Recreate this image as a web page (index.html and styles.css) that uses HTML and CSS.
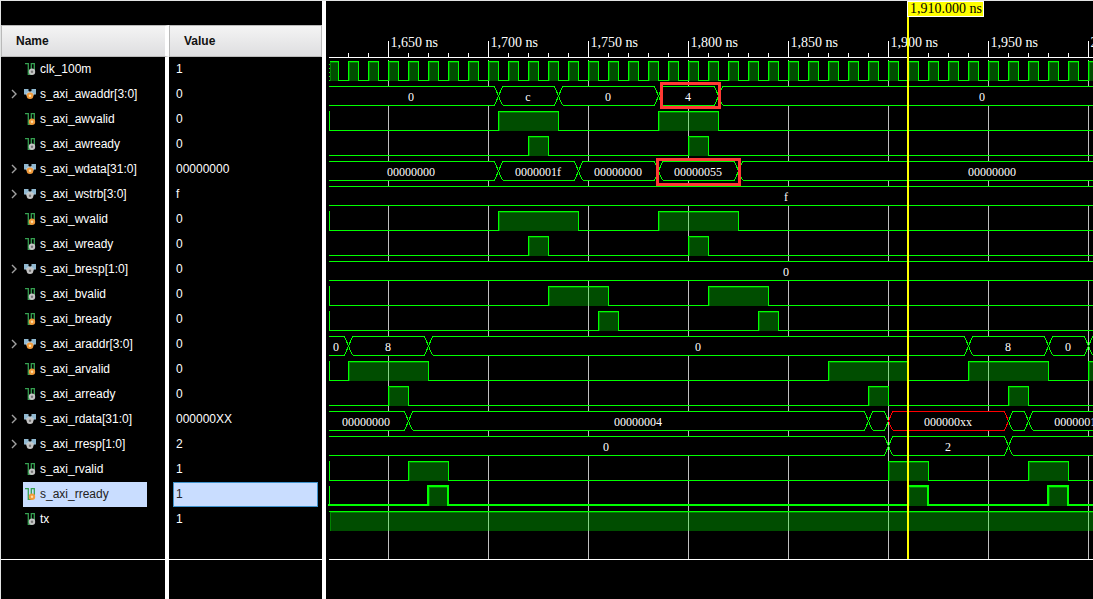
FILE: index.html
```
<!DOCTYPE html>
<html lang="en">
<head>
<meta charset="utf-8">
<title>Waveform</title>
<link rel="stylesheet" href="styles.css">
</head>
<body>
<svg class="symbols" aria-hidden="true">
  <symbol id="scalar" viewBox="0 0 12 12">
    <path d="M1 0.700H4.300V11.300H7.300V0.700H10.300V7" fill="none" stroke="#35a050" stroke-width="1.300"/>
    <circle cx="8" cy="8.700" r="3.200" fill="currentColor"/>
    <circle cx="8" cy="8.700" r="1.200" class="badge-core"/>
  </symbol>
  <symbol id="bus" viewBox="0 0 12 12">
    <path d="M0 1H4.500V3L6 4L7.500 3V1H12V6.500H9L6 8L3 6.500H0Z" fill="#90b8d0"/>
    <path d="M1.500 6L4.500 3.500H7.500L10.500 6L9 8.500H3Z" fill="#c8d4dc" opacity="0.700"/>
    <circle cx="6" cy="7.800" r="3.300" fill="currentColor"/>
    <circle cx="6" cy="7.800" r="1.200" class="badge-core"/>
  </symbol>
  <symbol id="chevron" viewBox="0 0 6 10">
    <path d="M1 1L5 5L1 9" fill="none" stroke="currentColor" stroke-width="1.400"/>
  </symbol>
</svg>
<main class="viewer">
  <section class="signals">
    <div class="spacer"></div>
    <table class="signal-table">
      <thead><tr><th class="name-head" scope="col">Name</th><th class="value-head" scope="col">Value</th></tr></thead>
      <tbody id="rows"></tbody>
    </table>
  </section>
  <section class="wave"><svg id="plot" class="plot" role="img" aria-label="Signal waveforms"></svg></section>
</main>
<script src="wave.js"></script>
</body>
</html>
```
FILE: styles.css
```
* { box-sizing: border-box; }
body {
  margin: 0;
  height: 100vh;
  background: #000;
  color: #fff;
  font: 12px/24px "Liberation Sans", Arial, sans-serif;
  overflow: hidden;
}
.symbols { position: absolute; width: 0; height: 0; }
.viewer {
  display: flex;
  height: 100%;
  border-top: 1px solid #e2e4e4;
  border-left: 1px solid #e2e4e4;
}
.signals {
  flex: 0 0 325px;
  display: flex;
  flex-direction: column;
  border-right: 4px solid #fff;
}
.spacer { flex: 0 0 24px; }
.signal-table {
  flex: 1;
  width: 100%;
  height: 100%;
  table-layout: fixed;
  border-spacing: 0;
}
th {
  height: 32px;
  padding: 0 14px;
  border: 1px solid #b9b9b9;
  background: linear-gradient(#f4f4f4, #dedee0);
  background-clip: padding-box;
  color: #111;
  text-align: left;
}
.name-head { width: 168px; border-right: 4px solid #fff; }
td { height: 25px; padding: 0; }
td:first-child { border-right: 4px solid #fff; }
.name-cell { display: flex; height: 25px; align-items: stretch; }
.expand {
  display: flex;
  align-items: center;
  width: 22px;
  padding: 0 0 1px 10px;
  border: 0;
  background: none;
  color: #a0a0a0;
}
.expand svg { width: 6px; height: 10px; }
.indent { width: 22px; }
.signal {
  display: flex;
  align-items: center;
  gap: 4px;
  flex: 1;
  margin-right: 18px;
  padding: 0 0 1px 1px;
}
.icon { width: 12px; height: 12px; }
.internal { color: #c4c4c4; fill: #777; }
.port { color: #f29a3a; fill: #ffe0a8; }
.value { height: 25px; margin: 0 4px; padding: 0 3px; }
.selected .signal, .selected .value { background: #c9ddff; color: #222; }
.selected .value { border: 1px solid #3f92cc; padding: 0 2px; line-height: 22px; }
.gap td { height: 27px; }
.rest td { height: auto; border-top: 1px solid #fff; }
.wave { flex: 1; min-width: 0; }
.plot { display: block; width: 100%; height: 100%; }
.plot path, .plot rect { shape-rendering: crispEdges; }
.line { fill: none; stroke: #0f0; }
.thick { stroke-width: 2; }
.fill { fill: rgba(0, 255, 0, 0.3); }
.bus { fill: #000; stroke: #0f0; }
.unknown { stroke: #f00; }
.grid { stroke: #c0c0c0; }
.ruler { stroke: #fff; }
.dots { stroke: #0f0; stroke-dasharray: 1 3; }
.bus-text { fill: #fff; font: 12px "Liberation Serif", serif; text-anchor: middle; }
.time-text { fill: #fff; font: 14px "Liberation Serif", serif; }
.flag-text { fill: #000; }
.flag { fill: #ff0; stroke: #fff; }
.cursor { fill: #ff0; }
.mark { fill: none; stroke: #ff3a33; stroke-width: 3; }
```
FILE: wave.js
```
// kind: "scalar" uses high intervals; "bus" uses change times and labels [time, text]. Times in ns.
const signals = [
  { name: "clk_100m", value: "1", clock: true },
  { name: "s_axi_awaddr[3:0]", value: "0", port: true, changes: [1705, 1735, 1785, 1815], labels: [[1661.5, "0"], [1720, "c"], [1760, "0"], [1800, "4"], [1947, "0"]] },
  { name: "s_axi_awvalid", value: "0", port: true, edge: true, high: [[1705, 1735], [1785, 1815]] },
  { name: "s_axi_awready", value: "0", high: [[1720, 1730], [1800, 1810]] },
  { name: "s_axi_wdata[31:0]", value: "00000000", port: true, changes: [1705, 1745, 1785, 1825], labels: [[1661.5, "00000000"], [1725, "0000001f"], [1765, "00000000"], [1805, "00000055"], [1952, "00000000"]] },
  { name: "s_axi_wstrb[3:0]", value: "f", changes: [], labels: [[1849, "f"]] },
  { name: "s_axi_wvalid", value: "0", port: true, edge: true, high: [[1705, 1745], [1785, 1825]] },
  { name: "s_axi_wready", value: "0", high: [[1720, 1730], [1800, 1810]] },
  { name: "s_axi_bresp[1:0]", value: "0", changes: [], labels: [[1849, "0"]] },
  { name: "s_axi_bvalid", value: "0", edge: true, high: [[1730, 1760], [1810, 1840]] },
  { name: "s_axi_bready", value: "0", port: true, edge: true, high: [[1755, 1765], [1835, 1845]] },
  { name: "s_axi_araddr[3:0]", value: "0", port: true, changes: [1630, 1670, 1940, 1980, 2000], labels: [[1624, "0"], [1650, "8"], [1805, "0"], [1960, "8"], [1990, "0"]] },
  { name: "s_axi_arvalid", value: "0", port: true, edge: true, high: [[1630, 1670], [1870, 1910], [1940, 1980], [2000, 2040]] },
  { name: "s_axi_arready", value: "0", high: [[1650, 1660], [1890, 1900], [1960, 1970]] },
  { name: "s_axi_rdata[31:0]", value: "000000XX", changes: [1660, 1890, 1900, 1960, 1970], unknown: 1900, labels: [[1639, "00000000"], [1775, "00000004"], [1930, "000000xx"], [1995, "00000011"]] },
  { name: "s_axi_rresp[1:0]", value: "2", changes: [1900, 1960], labels: [[1759, "0"], [1930, "2"]] },
  { name: "s_axi_rvalid", value: "1", edge: true, high: [[1660, 1680], [1900, 1920], [1970, 1990]] },
  { name: "s_axi_rready", value: "1", port: true, edge: true, selected: true, high: [[1670, 1680], [1910, 1920], [1980, 1990]] },
  { name: "tx", value: "1", always: true }
];

const LEFT = 3, TOP = 60, PITCH = 25, SWING = 19, BOTTOM = 558;
const xOf = t => 62 + (t - 1650) * 2;

document.getElementById("rows").innerHTML = signals.map(s => `
  <tr class="${s.selected ? "selected" : ""}">
    <td><div class="name-cell">${s.changes
      ? `<button class="expand" aria-label="Expand ${s.name}"><svg><use href="#chevron"/></svg></button>`
      : `<span class="indent"></span>`}
      <span class="signal"><svg class="icon ${s.port ? "port" : "internal"}"><use href="#${s.changes ? "bus" : "scalar"}"/></svg><span>${s.name}</span></span></div></td>
    <td><div class="value">${s.value}</div></td>
  </tr>`).join("") + `<tr class="gap"><td></td><td></td></tr><tr class="rest"><td></td><td></td></tr>`;

const path = (cls, d) => `<path class="${cls}" d="${d}"/>`;
const rect = (cls, x, y, w, h) => `<rect class="${cls}" x="${x}" y="${y}" width="${w}" height="${h}"/>`;
const text = (cls, x, y, s) => `<text class="${cls}" x="${x}" y="${y}">${s}</text>`;

function pulseFill(a, b, y) {
  return rect("fill", a + 1, y + 1, b - a - 1, SWING) +
    rect("fill", a + 1, y + 1, b - a - 1, 1) + rect("fill", a + 1, y + 2, 1, SWING - 1);
}

function drawScalar(s, y, width) {
  const half = s.selected ? 0 : 0.5;
  const hi = y + half, lo = hi + SWING;
  if (s.always) return pulseFill(LEFT, width + 4, y) + path("line", `M${LEFT} ${hi}H${width}`);
  let high = s.high, out = "", d;
  if (s.clock) {
    high = [];
    for (let t = 1630; xOf(t) < width; t += 10) high.push([t, t + 5]);
    out += pulseFill(LEFT, 12, y) + path("dots", `M3.5 ${y + 3}V${y + 20}`);
    d = `M${LEFT + 1} ${hi}H12.5V${lo}`;
  } else {
    d = `M${s.selected ? LEFT - 1 : LEFT} ${lo}`;
  }
  for (const [a, b] of high) {
    out += pulseFill(xOf(a), xOf(b), y);
    d += `H${xOf(a) + half}V${hi}H${xOf(b) + half}V${lo}`;
  }
  d += `H${Math.max(width, xOf(high[high.length - 1][1]))}`;
  if (s.edge) out += path("line", `M3.5 ${y}V${y + SWING}`);
  return out + path(s.selected ? "line thick" : "line", d);
}

function drawBus(s, y, width) {
  const hi = y + 0.5, lo = hi + SWING, mid = hi + SWING / 2;
  const stops = [null, ...s.changes, null];
  let out = "";
  for (let i = 0; i + 1 < stops.length; i++) {
    const a = stops[i] && xOf(stops[i]) + 0.5, b = stops[i + 1] && xOf(stops[i + 1]) + 0.5;
    const left = a ? `M${a + 4} ${lo}L${a} ${mid}L${a + 4} ${hi}` : `M${LEFT} ${lo}M${LEFT} ${hi}`;
    const right = b ? `H${b - 4}L${b} ${mid}L${b - 4} ${lo}` : `H${width + 8}V${lo}`;
    const end = a ? a + 4 : LEFT;
    out += path(s.unknown && stops[i] === s.unknown ? "bus unknown" : "bus", left + right + `H${end}`);
  }
  for (const [t, label] of s.labels) out += text("bus-text", xOf(t), y + 15, label);
  return out;
}

function draw() {
  const plot = document.getElementById("plot");
  const width = plot.parentElement.clientWidth;
  let out = "", grid = "", ticks = `M${LEFT} 56.5H${width}M${LEFT} ${BOTTOM}.5H${width}`;
  for (let t = 1630; xOf(t) < width; t += 10) {
    const x = xOf(t) + 0.5;
    if (t % 50) ticks += `M${x} 52V56`;
    else {
      ticks += `M${x} 40V56`;
      grid += `M${x} 59V${BOTTOM}`;
      out += text("time-text", x + 2, 46, t.toLocaleString("en-US") + " ns");
    }
  }
  out += path("grid", grid) + path("ruler", ticks);
  signals.forEach((s, i) => {
    const y = TOP + i * PITCH;
    out += s.changes ? drawBus(s, y, width) : drawScalar(s, y, width);
  });
  out += rect("mark", 335.5, 82.5, 58, 24) + rect("mark", 331.5, 158.5, 82, 25);
  out += rect("cursor", 581, 0, 2, BOTTOM) + rect("flag", 581.5, 0.5, 76, 15) +
    text("time-text flag-text", 584, 12, "1,910.000 ns");
  plot.innerHTML = out;
}
draw();
window.addEventListener("resize", draw);
```
